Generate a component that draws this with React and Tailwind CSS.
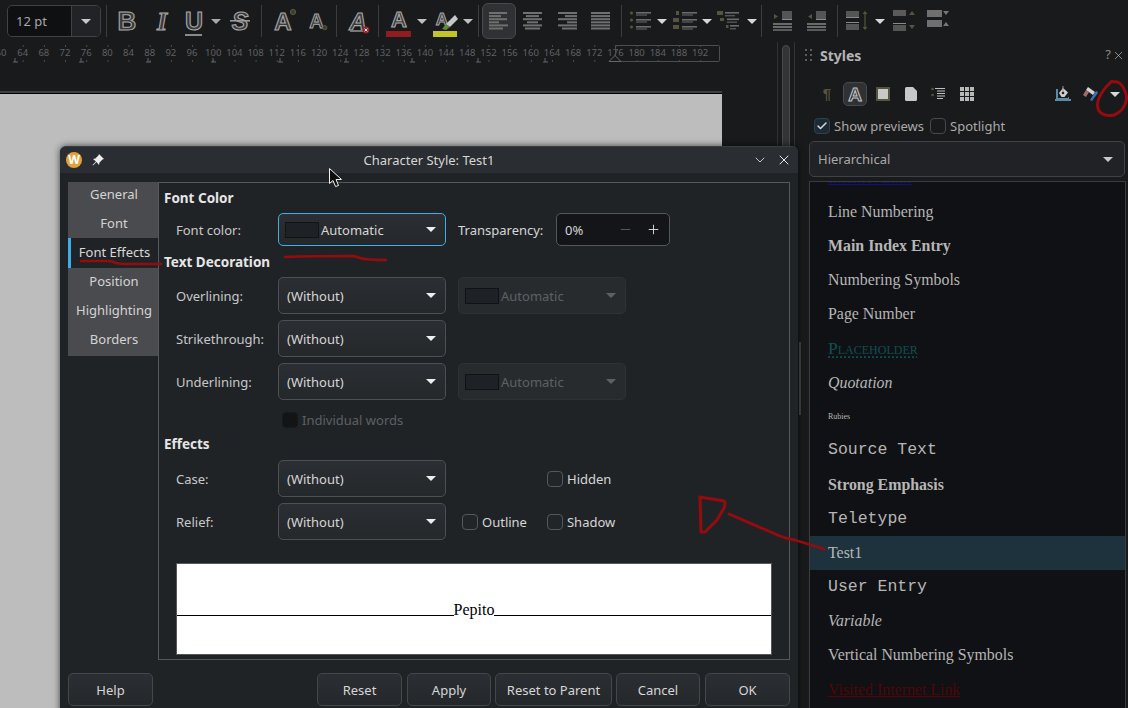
import { X, ChevronDown, Check, Minus, Plus } from 'lucide-react';

const sans = 'font-["Noto_Sans",sans-serif]';

function Arrow({ className = 'border-t-[#e8e8e8]' }) {
  return <span className={`block h-0 w-0 border-x-[5px] border-t-[5px] border-x-transparent ${className}`} />;
}

function Sep() {
  return <div className="h-[32px] w-px shrink-0 bg-[#3c3d3f]" />;
}

// outlined toolbar letter, the picture has them hollow with a light edge
function Letter({ ch, size = 25, italic, bold = true, family = 'Liberation Sans', children, w = 30 }) {
  return (
    <svg width={w} height="32" viewBox={`0 0 ${w} 32`}>
      <text
        x={w / 2}
        y="24.5"
        textAnchor="middle"
        fontFamily={family}
        fontWeight={bold ? 700 : 400}
        fontStyle={italic ? 'italic' : 'normal'}
        fontSize={size}
        fill="#3a3a3a"
        stroke="#a8a8a8"
        strokeWidth="1.1"
      >
        {ch}
      </text>
      {children}
    </svg>
  );
}

function Lines({ rows }) {
  return (
    <svg width="22" height="20" viewBox="0 0 22 20">
      {rows.map(([x, w], i) => (
        <rect key={i} x={x} y={1 + i * 3.1} width={w} height="2" fill="#707070" />
      ))}
    </svg>
  );
}

function ListIcon({ kind }) {
  if (kind === 'bullet') {
    return (
      <svg width="22" height="20" viewBox="0 0 22 20">
        {[2, 9, 16].map((y) => (
          <g key={y}>
            <circle cx="2.5" cy={y} r="1.6" fill="#55553d" />
            <rect x="7" y={y - 1} width="15" height="1.6" fill="#6b6b6b" />
            <rect x="7" y={y + 1.3} width="11" height="1.4" fill="#555" />
          </g>
        ))}
      </svg>
    );
  }
  if (kind === 'number') {
    return (
      <svg width="24" height="20" viewBox="0 0 24 20">
        {[2, 9, 16].map((y) => (
          <g key={y}>
            <rect x={y === 2 ? 3 : 0} y={y - 2} width={y === 2 ? 3 : 6} height="4" fill="#55553d" />
            <rect x="9" y={y - 1} width="15" height="1.6" fill="#6b6b6b" />
            <rect x="9" y={y + 1.3} width="11" height="1.4" fill="#555" />
          </g>
        ))}
      </svg>
    );
  }
  return (
    <svg width="24" height="20" viewBox="0 0 24 20">
      <rect x="0" y="0" width="6" height="4" fill="#55553d" />
      <rect x="8" y="1" width="14" height="1.6" fill="#6b6b6b" />
      <rect x="8" y="4" width="10" height="1.4" fill="#555" />
      <rect x="3" y="7" width="4" height="3" fill="#55553d" />
      <rect x="10" y="7.5" width="12" height="1.6" fill="#6b6b6b" />
      <rect x="10" y="10.5" width="10" height="1.4" fill="#555" />
      <rect x="9" y="14" width="2.5" height="3" fill="#55553d" />
      <rect x="13" y="14" width="9" height="1.6" fill="#6b6b6b" />
      <rect x="13" y="17" width="6" height="1.4" fill="#555" />
    </svg>
  );
}

function Indent({ flip }) {
  return (
    <svg width="20" height="20" viewBox="0 0 20 20">
      <path d={flip ? 'M5 3l-4 2.5L5 8z' : 'M1 3l4 2.5L1 8z'} fill="#55553d" />
      <rect x="9" y="0" width="10" height="8" fill="#555" />
      <rect x="9" y="8" width="10" height="1" fill="#8a8a8a" />
      <rect x="0" y="12" width="19" height="2" fill="#6b6b6b" />
      <rect x="0" y="15" width="19" height="2" fill="#6b6b6b" />
      <rect x="0" y="18" width="19" height="2" fill="#5a5a5a" />
    </svg>
  );
}

function Spacing({ variant }) {
  if (variant === 0) {
    return (
      <svg width="22" height="22" viewBox="0 0 22 22">
        <rect x="0" y="1" width="13" height="6" fill="#555" />
        <rect x="0" y="7" width="13" height="1" fill="#8a8a8a" />
        <rect x="0" y="12" width="13" height="1" fill="#8a8a8a" />
        <rect x="0" y="14" width="13" height="6" fill="#555" />
        <path d="M19 1l-2.5 3h5zM19 20l-2.5-3h5z M18.4 4h1.2v13h-1.2z" fill="#55553d" />
      </svg>
    );
  }
  if (variant === 1) {
    return (
      <svg width="22" height="22" viewBox="0 0 22 22">
        <rect x="0" y="0" width="13" height="6" fill="#5a5a5a" />
        <rect x="0" y="13" width="13" height="1" fill="#8a8a8a" />
        <rect x="0" y="15" width="13" height="6" fill="#555" />
        <path d="M19 1l-3 4h6zM19 19l-3-4h6z" fill="#55553d" />
      </svg>
    );
  }
  return (
    <svg width="22" height="22" viewBox="0 0 22 22">
      <rect x="0" y="0" width="15" height="7" fill="#707070" />
      <rect x="0" y="10" width="15" height="7" fill="#707070" />
      <path d="M16 1h6l-3 4zM16 16h6l-3-4z" fill="#777" />
    </svg>
  );
}

function Toolbar() {
  return (
    <div className="flex h-[42px] items-center pl-[7px]">
      <div className="flex h-[32px] w-[94px] overflow-hidden rounded-[5px] border border-[#3f4144] bg-[#0f1012]">
        <span className="flex-1 pl-[8px] text-[13px] leading-[30px] text-[#a8a8a8]">12 pt</span>
        <span className="flex w-[29px] items-center justify-center border-l border-[#3f4144] bg-[#212326]">
          <Arrow className="border-t-[#c8c8c8]" />
        </span>
      </div>
      <div className="w-[5px]" />
      <Sep />
      <div className="flex w-[40px] justify-center"><Letter ch="B" size={26} /></div>
      <div className="flex w-[30px] justify-center"><Letter ch="I" italic size={26} family="Liberation Serif" /></div>
      <div className="flex w-[34px] justify-center">
        <Letter ch="U">
          <rect x="6" y="29" width="17" height="2" fill="#8a8a8a" />
        </Letter>
      </div>
      <div className="flex w-[10px] justify-center"><Arrow className="border-t-[#a8a8a8]" /></div>
      <div className="flex w-[38px] justify-center">
        <Letter ch="S" italic>
          <rect x="5" y="15" width="20" height="1.6" fill="#999" />
        </Letter>
      </div>
      <div className="w-[2px]" />
      <Sep />
      <div className="flex w-[42px] justify-center">
        <Letter ch="A" size={24}>
          <circle cx="25" cy="7" r="2.6" fill="#3d3d2e" stroke="#5c5c44" />
        </Letter>
      </div>
      <div className="flex w-[25px] justify-center">
        <Letter ch="A" size={24}>
          <circle cx="25" cy="24" r="2.6" fill="#3d3d2e" stroke="#5c5c44" />
        </Letter>
      </div>
      <div className="w-[7px]" />
      <Sep />
      <div className="flex w-[41px] justify-center">
        <Letter ch="A" size={24} italic>
          <rect x="7" y="25" width="15" height="2" fill="#777" />
          <circle cx="23" cy="25" r="3.4" fill="#a1222a" />
          <path d="M21.6 23.6l2.8 2.8M24.4 23.6l-2.8 2.8" stroke="#eee" strokeWidth="1" />
        </Letter>
      </div>
      <Sep />
      <div className="flex w-[39px] justify-center">
        <div className="relative h-[36px] w-[26px]">
          <svg className="absolute left-0 top-[3px] overflow-visible" width="26" height="24" viewBox="0 0 26 24">
            <text x="13" y="21" textAnchor="middle" fontFamily="Liberation Sans" fontWeight="700" fontSize="22" fill="#3a3a3a" stroke="#a8a8a8" strokeWidth="1.1">A</text>
          </svg>
          <div className="absolute left-0 top-[28px] h-[6px] w-[25px] bg-[#8f1c1f]" />
        </div>
      </div>
      <div className="flex w-[8px] justify-center"><Arrow className="border-t-[#c0c0c0]" /></div>
      <div className="flex w-[38px] justify-center">
        <svg width="25" height="32" viewBox="0 0 25 32">
          <text x="9" y="20" textAnchor="middle" fontFamily="Liberation Sans" fontWeight="700" fontSize="17" fill="#2d2d2d" stroke="#a8a8a8" strokeWidth="1">A</text>
          <path d="M13 19l9-9 3 4-8 8z" fill="#c8c8c8" />
          <path d="M9 24l4-5 4 3-4 3z" fill="#5f8c2e" />
          <rect x="0" y="26" width="24" height="6" fill="#c3c42a" />
        </svg>
      </div>
      <div className="flex w-[8px] justify-center"><Arrow className="border-t-[#c0c0c0]" /></div>
      <div className="w-[6px]" />
      <Sep />
      <div className="w-[3px]" />
      <div className="flex h-[36px] w-[34px] items-center justify-center rounded-[6px] border border-[#47494c] bg-[#2f3134]">
        <Lines rows={[[1, 18], [1, 12], [1, 18], [1, 10], [1, 19], [1, 14]]} />
      </div>
      <div className="flex w-[34px] justify-center"><Lines rows={[[1, 19], [4, 13], [1, 19], [5, 11], [1, 19], [3, 15]]} /></div>
      <div className="flex w-[34px] justify-center"><Lines rows={[[2, 19], [9, 12], [2, 19], [11, 10], [2, 19], [6, 15]]} /></div>
      <div className="flex w-[34px] justify-center"><Lines rows={[[1, 19], [1, 19], [1, 19], [1, 19], [1, 19], [1, 19]]} /></div>
      <div className="w-[3px]" />
      <Sep />
      <div className="flex w-[35px] justify-center"><ListIcon kind="bullet" /></div>
      <div className="flex w-[10px] justify-center"><Arrow className="border-t-[#d8d8d8]" /></div>
      <div className="flex w-[36px] justify-center"><ListIcon kind="number" /></div>
      <div className="flex w-[8px] justify-center"><Arrow className="border-t-[#d8d8d8]" /></div>
      <div className="flex w-[36px] justify-center"><ListIcon kind="outline" /></div>
      <div className="flex w-[9px] justify-center"><Arrow className="border-t-[#d8d8d8]" /></div>
      <div className="w-[5px]" />
      <Sep />
      <div className="flex w-[41px] justify-center"><Indent /></div>
      <div className="flex w-[27px] justify-center"><Indent flip /></div>
      <div className="w-[7px]" />
      <Sep />
      <div className="flex w-[38px] justify-center"><Spacing variant={0} /></div>
      <div className="flex w-[8px] justify-center"><Arrow className="border-t-[#d8d8d8]" /></div>
      <div className="flex w-[40px] justify-center"><Spacing variant={1} /></div>
      <div className="flex w-[28px] justify-center"><Spacing variant={2} /></div>
    </div>
  );
}

function Ruler() {
  const labels = [];
  for (let n = 64; n <= 192; n += 4) labels.push(n);
  const stops = [15, 81, 148, 213, 280, 346, 412, 478, 545];
  return (
    <svg width="777" height="49" viewBox="0 42 777 49" className="block shrink-0">
      <text x="1" y="56" textAnchor="middle" fontFamily="Noto Sans" fontSize="9.5" fill="#606163">60</text>
      {labels.map((n) => {
        const x = 22.7 + ((n - 64) / 4) * 21.17;
        return (
          <g key={n}>
            <text x={x} y="56" textAnchor="middle" fontFamily="Noto Sans" fontSize="9.5" fill="#606163">{n}</text>
            <rect x={x} y="45" width="1" height="2" fill="#4b4c4e" />
            <rect x={x} y="60" width="1" height="2" fill="#4b4c4e" />
          </g>
        );
      })}
      {stops.map((x) => (
        <path key={x} d={`M${x} 58v4M${x - 2} 62h5`} stroke="#66676a" fill="none" />
      ))}
      <path d="M615.5 56V45.5h103q1 0 1 1v14q0 1-1 1H621" stroke="#4d4e50" fill="none" />
      <path d="M609 61.5h12l-6-6z" stroke="#66676a" fill="#191a1c" />
    </svg>
  );
}

function Combo({ text, focus, swatch, disabled, tall = true }) {
  const edge = focus ? 'border-[#3daee9]' : disabled ? 'border-[#2f3235]' : 'border-[#4d5053]';
  const fill = disabled ? 'bg-[#282b2e]' : 'bg-gradient-to-b from-[#2b2e32] to-[#25282b]';
  return (
    <div className={`flex w-[168px] items-center rounded-[5px] border pr-[9px] ${tall ? 'h-[37px]' : 'h-[33px]'} ${edge} ${fill} ${swatch ? 'pl-[6px]' : 'pl-[8px]'}`}>
      {swatch && <span className={`mr-[2px] h-[16px] w-[34px] border bg-[#1e2226] ${disabled ? 'border-[#101214]' : 'border-[#111315]'}`} />}
      <span className={`flex-1 pt-[2px] ${disabled ? 'text-[#5e6063]' : 'text-[#d6d6d6]'}`}>{text}</span>
      <Arrow className={disabled ? 'border-t-[#5e6063]' : 'border-t-[#eeeeee]'} />
    </div>
  );
}

function Box({ label, disabled, className = '' }) {
  return (
    <label className={`flex items-center gap-[4px] ${className}`}>
      <span className={`h-[16px] w-[16px] rounded-[4px] border ${disabled ? 'border-[#17191b] bg-[#131416]' : 'border-[#55585b] bg-[#222528]'}`} />
      <span className={`pt-[2px] ${disabled ? 'text-[#5e6063]' : 'text-[#d6d6d6]'}`}>{label}</span>
    </label>
  );
}

function Row({ label, children, className = 'mt-[6px]' }) {
  return (
    <div className={`flex items-center pl-[12px] ${className}`}>
      <span className="w-[102px] pt-[2px] text-[#c8c8c8]">{label}</span>
      {children}
    </div>
  );
}

function Heading({ children, className }) {
  return <h3 className={`h-[18px] text-[13.5px] font-bold leading-[18px] text-[#e6e6e6] ${className}`}>{children}</h3>;
}

const tabs = [
  { t: 'General', c: 'h-[28px] pb-[3px]' },
  { t: 'Font', c: 'h-[28px] pb-[1px]' },
  { t: 'Font Effects', c: 'h-[30px]' },
  { t: 'Position', c: 'h-[28px]' },
  { t: 'Highlighting', c: 'h-[29px]' },
  { t: 'Borders', c: 'h-[31px] pb-[2px]' },
];

function Tabs() {
  return (
    <div className="w-[90px] shrink-0 self-start">
      {tabs.map(({ t, c }) => (
        <div
          key={t}
          className={
            t === 'Font Effects'
              ? `flex items-center justify-center border-l-[3px] border-[#3daee9] bg-[#202326] text-[#d8d8d8] ${c}`
              : `flex items-center justify-center bg-[#4a4b4e] pl-[2px] text-[#d4d4d4] ${c}`
          }
        >
          {t}
        </div>
      ))}
    </div>
  );
}

function Btn({ children, w, className = '' }) {
  return (
    <button className={`h-[33px] rounded-[5px] border border-[#44474a] bg-gradient-to-b from-[#2b2e32] to-[#25282b] pt-[2px] text-[#d6d6d6] ${w} ${className}`}>
      {children}
    </button>
  );
}

function Dialog() {
  return (
    <div className={`absolute left-[60px] top-[146px] h-[570px] w-[738px] rounded-t-[6px] border-t border-[#3a3d40] bg-[#202326] text-[13px] shadow-[0_0_7px_rgba(0,0,0,0.65)] ${sans}`}>
      <div className="relative flex h-[26px] items-center rounded-t-[6px] bg-[#2a2d31] pl-[6px] pr-[6px]">
        <span className="flex h-[16px] w-[16px] items-center justify-center rounded-full bg-[#e3a23b] text-[12px] font-bold leading-none text-white">W</span>
        <svg className="ml-[10px]" width="12" height="12" viewBox="0 0 12 12">
          <path d="M7 0l5 5-1.5.6-3 3L7 11 4.5 8 1 11.5 0.5 11 4 7.500 1 5l2.400-.500 3-3z" fill="#eeeeee" />
        </svg>
        <span className="absolute inset-x-0 pt-[2px] text-center text-[#d6d6d6]">Character Style: Test1</span>
        <ChevronDown className="relative ml-auto text-[#e0e0e0]" size={16} strokeWidth={1.3} />
        <X className="relative ml-[8px] text-[#e8e8e8]" size={16} strokeWidth={1.5} />
      </div>

      <div className="flex pl-[8px] pt-[9px]">
        <Tabs />
        <div className="h-[478px] w-[632px] border border-[#55585b] pl-[5px] pt-[6px]">
          <Heading>Font Color</Heading>
          <Row label="Font color:">
            <Combo text="Automatic" focus swatch tall={false} />
            <span className="ml-[12px] w-[98px] pt-[2px] text-[#d6d6d6]">Transparency:</span>
            <div className="flex h-[33px] w-[114px] items-center rounded-[5px] border border-[#55585b] bg-[#141518] pl-[8px] pr-[8px]">
              <span className="flex-1 pt-[2px] text-[#d6d6d6]">0%</span>
              <Minus className="text-[#606265]" size={15} strokeWidth={1.4} />
              <Plus className="ml-[13px] text-[#e8e8e8]" size={15} strokeWidth={1.4} />
            </div>
          </Row>
          <Heading className="mt-[7px]">Text Decoration</Heading>
          <Row label="Overlining:">
            <Combo text="(Without)" />
            <div className="ml-[12px]"><Combo text="Automatic" swatch disabled /></div>
          </Row>
          <Row label="Strikethrough:">
            <Combo text="(Without)" />
          </Row>
          <Row label="Underlining:">
            <Combo text="(Without)" />
            <div className="ml-[12px]"><Combo text="Automatic" swatch disabled /></div>
          </Row>
          <div className="mt-[9px] h-[18px] pl-[118px]">
            <Box label="Individual words" disabled />
          </div>
          <Heading className="mt-[8px]">Effects</Heading>
          <Row label="Case:" className="mt-[7px]">
            <Combo text="(Without)" />
            <Box label="Hidden" className="ml-[101px]" />
          </Row>
          <Row label="Relief:">
            <Combo text="(Without)" />
            <Box label="Outline" className="ml-[16px]" />
            <Box label="Shadow" className="ml-[20px]" />
          </Row>
          <div className="ml-[12px] mt-[23px] h-[92px] w-[596px] border border-[#55585b] bg-white">
            <div className="flex h-[52px] items-end">
              <div className="h-px flex-1 bg-black" />
              <span className="mb-[-3px] font-['Liberation_Serif',serif] text-[16px] leading-[18px] text-black">Pepito</span>
              <div className="h-px flex-1 bg-black" />
            </div>
          </div>
        </div>
      </div>

      <div className="mt-[13px] flex pl-[8px] pr-[8px]">
        <Btn w="w-[85px]">Help</Btn>
        <Btn w="w-[85px]" className="ml-auto">Reset</Btn>
        <Btn w="w-[84px]" className="ml-[5px]">Apply</Btn>
        <Btn w="w-[117px]" className="ml-[4px]">Reset to Parent</Btn>
        <Btn w="w-[84px]" className="ml-[4px]">Cancel</Btn>
        <Btn w="w-[85px]" className="ml-[5px]">OK</Btn>
      </div>
    </div>
  );
}

const serif = "font-['Liberation_Serif',serif] text-[15.9px]";
const mono = "font-['Liberation_Mono',monospace] text-[16.5px]";

const styles = [
  { t: 'Internet Link', c: `${serif} text-[#11117a] underline` },
  { t: 'Line Numbering', c: serif },
  { t: 'Main Index Entry', c: `${serif} font-bold` },
  { t: 'Numbering Symbols', c: serif },
  { t: 'Page Number', c: serif },
  { t: 'Placeholder', c: "font-['Liberation_Serif',serif] text-[17.5px] text-[#0e5050] underline decoration-dotted underline-offset-2 [font-variant:small-caps]" },
  { t: 'Quotation', c: `${serif} italic` },
  { t: 'Rubies', c: "font-['Liberation_Serif',serif] text-[8px]" },
  { t: 'Source Text', c: mono },
  { t: 'Strong Emphasis', c: `${serif} font-bold` },
  { t: 'Teletype', c: mono },
  { t: 'Test1', c: serif, active: true },
  { t: 'User Entry', c: mono },
  { t: 'Variable', c: `${serif} italic` },
  { t: 'Vertical Numbering Symbols', c: serif },
  { t: 'Visited Internet Link', c: `${serif} text-[#4f0608] underline` },
];

function StyleKinds() {
  return (
    <div className="mt-[16px] flex h-[24px] items-center pl-[21px]">
      <span className="flex w-[12px] justify-center font-['Liberation_Sans',sans-serif] text-[15px] font-bold text-[#55553d]">¶</span>
      <div className="ml-[10px] flex h-[24px] w-[24px] items-center justify-center rounded-[5px] border border-[#47494c] bg-[#2f3134]">
        <svg className="overflow-visible" width="18" height="18" viewBox="0 0 18 18">
          <text x="9" y="16" textAnchor="middle" fontFamily="Liberation Sans" fontWeight="700" fontSize="19" fill="#34363a" stroke="#c8c8c8" strokeWidth="1">A</text>
        </svg>
      </div>
      <div className="ml-[9px] h-[14px] w-[14px] border-2 border-[#55553d] bg-[#c8c8c8]" />
      <svg className="ml-[15px]" width="12" height="14" viewBox="0 0 12 14">
        <path d="M1.500 0H8l4 4v8.500q0 1.500-1.500 1.500h-9Q0 14 0 12.500v-11Q0 0 1.500 0z" fill="#c8c8c8" />
      </svg>
      <svg className="ml-[14px]" width="14" height="14" viewBox="0 0 14 14">
        <circle cx="1.500" cy="2" r="1.300" fill="#55553d" />
        <circle cx="1.500" cy="8" r="1.300" fill="#55553d" />
        <path d="M4 1.500h10M6 4h8M6 6.500h8M6 9h8M6 11.500h6" stroke="#c0c0c0" />
      </svg>
      <div className="ml-[15px] grid h-[14px] w-[14px] grid-cols-3 gap-px">
        {Array.from({ length: 9 }).map((_, i) => (
          <span key={i} className="bg-[#b8b8b8]" />
        ))}
      </div>
      <svg className="ml-[81px]" width="16" height="16" viewBox="0 0 16 16">
        <path d="M1 3h2v9h10v-1h1v2h2v2H0v-2h1z" fill="#5d8aa6" />
        <path d="M8 2l5 4.500-3.500 4.500h-3L4 7z" fill="#d0d0d0" />
        <path d="M8 0v6" stroke="#999" />
        <circle cx="8" cy="7" r="1.300" fill="#222" />
      </svg>
      <svg className="ml-[10px]" width="18" height="16" viewBox="0 0 18 16">
        <path d="M7 1l7 5-2 3-7-5z" fill="#d4d4d4" />
        <path d="M14 6l2-1 1 2-6 8-2-1z" fill="#3a6fb0" />
        <path d="M5 4L2 9l3 2 3-5z" fill="#a86a60" />
      </svg>
      <div className="ml-[11px]"><Arrow className="border-t-[#d8d8d8]" /></div>
    </div>
  );
}

function Sidebar() {
  return (
    <div className={`w-[328px] shrink-0 pr-[2px] text-[13px] text-[#a9a9a9] ${sans}`}>
      <div className="flex h-[24px] items-center pl-[5px] pr-[1px] pt-[2px]">
        <div className="grid grid-cols-2 gap-[3px]">
          {Array.from({ length: 6 }).map((_, i) => (
            <span key={i} className="h-[2px] w-[2px] bg-[#5a5b5d]" />
          ))}
        </div>
        <span className="ml-[8px] text-[14px] font-bold text-[#b4b4b4]">Styles</span>
        <span className="ml-auto text-[#8a8a8a]">?</span>
        <X className="ml-[1px] text-[#b8b8b8]" size={13} strokeWidth={1.3} />
      </div>
      <StyleKinds />
      <div className="mt-[12px] flex h-[16px] items-center pl-[14px]">
        <span className="flex h-[16px] w-[16px] items-center justify-center rounded-[4px] border border-[#2c4250] bg-[#1c2a33]">
          <Check className="text-[#d8d8d8]" size={12} strokeWidth={3} />
        </span>
        <span className="ml-[4px] w-[96px] pt-[2px] text-[#a9a9a9]">Show previews</span>
        <span className="h-[16px] w-[16px] rounded-[4px] border border-[#47494c]" />
        <span className="ml-[4px] pt-[2px]">Spotlight</span>
      </div>
      <div className="ml-[9px] mt-[7px] flex h-[36px] w-[316px] items-center rounded-[5px] border border-[#3f4144] bg-[#202225] pl-[8px] pr-[11px]">
        <span className="flex-1 pt-[2px]">Hierarchical</span>
        <Arrow className="border-t-[#c8c8c8]" />
      </div>
      <div className="ml-[9px] mt-[4px] h-[540px] w-[317px] overflow-hidden border border-[#3a3c3f] bg-[#101114]">
        <div className="mt-[-21px] text-[#b6b6b6]">
          {styles.map((s) => (
            <div
              key={s.t}
              className={`flex h-[34.1px] items-center pl-[18px] ${s.active ? 'bg-[#1d323d]' : ''}`}
            >
              <span className={s.c}>{s.t}</span>
            </div>
          ))}
        </div>
      </div>
    </div>
  );
}

function Marks() {
  return (
    <svg className="pointer-events-none absolute inset-0" width="1128" height="708" viewBox="0 0 1128 708" fill="none">
      <g stroke="#960b0e" strokeWidth="2.600" strokeLinecap="round" strokeLinejoin="round">
        <path d="M81 261h27q4 0 8 2 q4 1 10 1h35" />
        <path d="M285 257q30-1 69-1l6 2 q6 2 26 2" />
        <path d="M700 497l24 4q2 1 0 7l-7 12-12 12-4 0z" strokeWidth="3" />
        <path d="M729 514l44 19q10 5 22 7l29 9" strokeWidth="2.800" />
        <path d="M1114 82q5-1 9 5 q5 9 3 14 q-2 10-12 14 q-10 2-15-4 q-3-6 0-13 q4-8 8-12 l5-5" strokeWidth="3" />
      </g>
      <path d="M329.500 168.500v15l3.500-3 2.500 6 3-1-2.500-6h5.500z" fill="#0d0d0d" stroke="#f2f2f2" strokeWidth="1" />
    </svg>
  );
}

export default function App() {
  return (
    <div className={`relative h-[708px] w-[1128px] overflow-hidden bg-[#191a1c] ${sans}`}>
      <Toolbar />
      <div className="flex h-[666px]">
        <div className="flex h-full w-[777px] shrink-0 flex-col">
          <Ruler />
          <div className="h-[2px] w-[722px] shrink-0 bg-[#3e3f41]" />
          <div className="w-[722px] flex-1 border-t border-black bg-[#bdbdbd]" />
        </div>
        <div className="h-full w-[18px] shrink-0 border-x border-[#323335] pl-[4px] pt-[3px]">
          <div className="h-full w-[8px] rounded-t-full border border-[#47494c] bg-[#333436]" />
        </div>
        <div className="w-[5px] shrink-0" />
        <Sidebar />
      </div>
      <Dialog />
      <div className="absolute left-[799px] top-[342px] h-[73px] w-[2px] bg-[#35373a]" />
      <Marks />
    </div>
  );
}
